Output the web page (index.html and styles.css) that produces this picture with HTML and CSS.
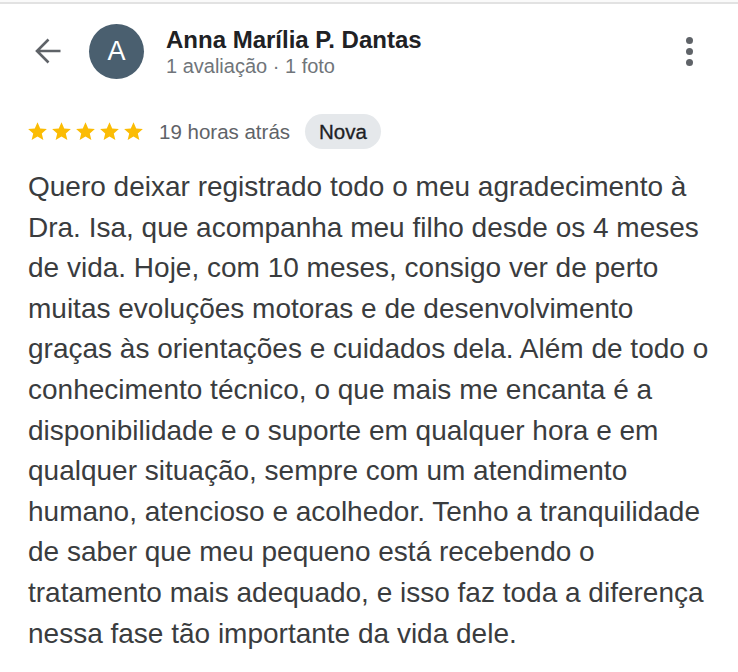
FILE: index.html
```html
<!DOCTYPE html>
<html lang="pt-BR">
<head>
<meta charset="utf-8">
<title>Avaliação</title>
<link rel="stylesheet" href="styles.css">
</head>
<body>
<div class="page">
  <header class="top">
    <button class="back" aria-label="Voltar">
      <svg width="28" height="28" viewBox="0 0 28 28"><path d="M26.5 14H3M14.5 2.5L3 14L14.5 25.5" fill="none" stroke="#5f6368" stroke-width="2.6"/></svg>
    </button>
    <div class="avatar">A</div>
    <div class="who">
      <div class="name">Anna Marília P. Dantas</div>
      <div class="meta">1 avaliação · 1 foto</div>
    </div>
    <div class="more" aria-label="Mais opções">
      <span class="dot"></span><span class="dot"></span><span class="dot"></span>
    </div>
  </header>
  <div class="rating">
    <div class="stars">
      <svg class="star" viewBox="0 0 24 24"><path d="M12 1.5l3.1 7.1 7.6.6-5.8 5 1.8 7.5L12 17.7l-6.7 4 1.8-7.5-5.8-5 7.6-.6z"/></svg>
      <svg class="star" viewBox="0 0 24 24"><path d="M12 1.5l3.1 7.1 7.6.6-5.8 5 1.8 7.5L12 17.7l-6.7 4 1.8-7.5-5.8-5 7.6-.6z"/></svg>
      <svg class="star" viewBox="0 0 24 24"><path d="M12 1.5l3.1 7.1 7.6.6-5.8 5 1.8 7.5L12 17.7l-6.7 4 1.8-7.5-5.8-5 7.6-.6z"/></svg>
      <svg class="star" viewBox="0 0 24 24"><path d="M12 1.5l3.1 7.1 7.6.6-5.8 5 1.8 7.5L12 17.7l-6.7 4 1.8-7.5-5.8-5 7.6-.6z"/></svg>
      <svg class="star" viewBox="0 0 24 24"><path d="M12 1.5l3.1 7.1 7.6.6-5.8 5 1.8 7.5L12 17.7l-6.7 4 1.8-7.5-5.8-5 7.6-.6z"/></svg>
    </div>
    <span class="time">19 horas atrás</span>
    <span class="chip">Nova</span>
  </div>
  <p class="text">Quero deixar registrado todo o meu agradecimento à<br>
Dra. Isa, que acompanha meu filho desde os 4 meses<br>
de vida. Hoje, com 10 meses, consigo ver de perto<br>
muitas evoluções motoras e de desenvolvimento<br>
graças às orientações e cuidados dela. Além de todo o<br>
conhecimento técnico, o que mais me encanta é a<br>
disponibilidade e o suporte em qualquer hora e em<br>
qualquer situação, sempre com um atendimento<br>
humano, atencioso e acolhedor. Tenho a tranquilidade<br>
de saber que meu pequeno está recebendo o<br>
tratamento mais adequado, e isso faz toda a diferença<br>
nessa fase tão importante da vida dele.</p>
</div>
</body>
</html>
```
FILE: styles.css
```css
* { box-sizing: border-box; }
html, body { margin: 0; padding: 0; background: #fff; }
body { font-family: "Liberation Sans", Arial, sans-serif; color: #202124; }
.page {
  width: 738px;
  height: 672px;
  overflow: hidden;
  border-top: 2px solid #fafafa;
}
.page::before {
  content: "";
  display: block;
  height: 2px;
  background: #e2e2e2;
}
.top {
  display: flex;
  align-items: center;
  height: 94px;
  padding: 0 0 0 34px;
}
.back {
  border: 0; background: none; padding: 0;
  width: 28px; height: 28px;
  display: flex;
  margin-right: 27px;
}
.avatar {
  width: 55px; height: 55px;
  border-radius: 50%;
  background: #4a5f6f;
  color: #fff;
  font-size: 27px;
  display: flex; align-items: center; justify-content: center;
  margin-right: 22px;
}
.who { flex: 1; display: flex; flex-direction: column; padding-top: 1px; }
.name { font-size: 24px; font-weight: bold; color: #202124; line-height: 28px; }
.meta { font-size: 20px; color: #70757a; line-height: 24px; }
.more {
  display: flex; flex-direction: column; gap: 4px;
  margin-right: 45px;
}
.dot { width: 7px; height: 7px; border-radius: 50%; background: #5f6368; }
.rating {
  display: flex; align-items: center;
  padding-left: 27px;
  height: 35px;
  margin-top: 16px;
}
.stars { display: flex; gap: 3px; margin-right: 15px; }
.star { width: 21px; height: 21px; fill: #fbbc04; }
.time { font-size: 20.5px; color: #5f6368; margin-right: 15px; }
.chip {
  background: #e5e8eb;
  color: #202124;
  font-size: 20.5px;
  height: 35px;
  padding: 0 14px;
  border-radius: 18px;
  display: flex; align-items: center;
  -webkit-text-stroke: 0.3px #202124;
}
.text {
  margin: 18px 0 0 28px;
  font-size: 28px;
  line-height: 40.6px;
  color: #3a3c3e;
  white-space: nowrap;
}
```
